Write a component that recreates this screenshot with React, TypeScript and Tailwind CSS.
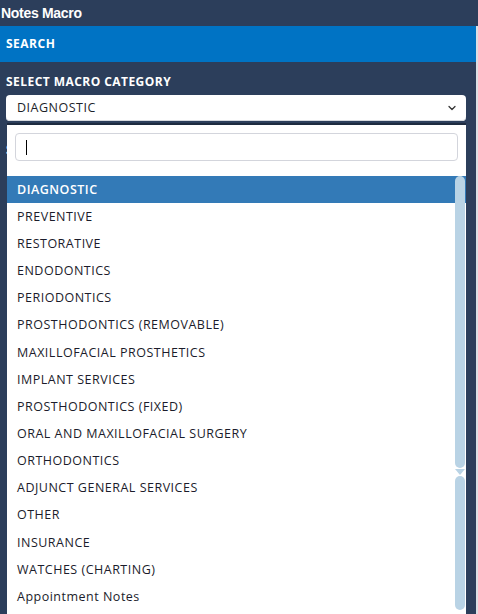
import { ChevronDown } from 'lucide-react';

const categories = [
  'DIAGNOSTIC',
  'PREVENTIVE',
  'RESTORATIVE',
  'ENDODONTICS',
  'PERIODONTICS',
  'PROSTHODONTICS (REMOVABLE)',
  'MAXILLOFACIAL PROSTHETICS',
  'IMPLANT SERVICES',
  'PROSTHODONTICS (FIXED)',
  'ORAL AND MAXILLOFACIAL SURGERY',
  'ORTHODONTICS',
  'ADJUNCT GENERAL SERVICES',
  'OTHER',
  'INSURANCE',
  'WATCHES (CHARTING)',
  'Appointment Notes',
];

const App = () => {
  const selected = 'DIAGNOSTIC';

  return (
    <div className="w-[478px] h-[614px] bg-[#2c3e5b] overflow-hidden flex flex-col font-['Open_Sans',sans-serif]">
      <div className="h-[26px] flex items-center px-[1px] text-white font-bold text-[14px] tracking-[-0.3px] font-['Liberation_Sans',Arial,sans-serif]">
        Notes Macro
      </div>

      <div className="flex flex-1">
        <div className="flex-1 flex flex-col">
          <div className="h-[36px] bg-[#0073c4] flex items-center px-[6px] text-white font-bold text-[12px] tracking-[0.5px]">
            SEARCH
          </div>

          <div className="relative px-[6px] pt-[12px]">
            <div className="text-white font-bold text-[12px] tracking-[0.45px] leading-[16px] mb-[5px]">SELECT MACRO CATEGORY</div>
            <div className="h-[26px] w-[460px] bg-white rounded-[4px] flex items-center justify-between pl-[11px] pr-[8px] shadow-[inset_0_-1px_0_#d6d9de]">
              <span className="text-[12.5px] font-medium tracking-[0.5px] text-[#1d1f2a]">{selected}</span>
              <ChevronDown size={12} strokeWidth={2.5} className="text-[#333]" />
            </div>
            <div className="mt-[20px] text-white font-bold text-[12px] tracking-[0.45px]">SELECT MACRO</div>

            {/* open dropdown */}
            <div className="absolute left-[7px] top-[61px] w-[459px] h-[520px] bg-white border-t-[2px] border-[#1e2b40]">
              <div className="px-[8px] pt-[8px] pb-[15px]">
                <div className="h-[28px] border border-[#d3d5dc] rounded-[4px] flex items-center pl-[10px]">
                  <div className="w-[1px] h-[15px] bg-black" />
                </div>
              </div>
              <ul className="relative">
                {categories.map((c) => (
                  <li
                    key={c}
                    className={`h-[27.15px] flex items-center pl-[10px] pt-[1px] text-[12.5px] tracking-[0.5px] ${
                      c === selected ? 'bg-[#337ab7] text-white font-semibold' : 'text-[#1b1c2b] font-medium'
                    }`}
                  >
                    {c}
                  </li>
                ))}
                <div className="absolute right-[1px] top-0 w-[10px] h-[292px] rounded-[5px] bg-[#b9d3e5]" />
                <div className="absolute right-[1px] top-[293px] w-[10px] h-[6px] bg-[#b9d3e5] [clip-path:polygon(0_0,100%_0,50%_100%)]" />
                <div className="absolute right-[1px] top-[300px] w-[10px] h-[134px] rounded-[5px] bg-[#b9d3e5]" />
              </ul>
            </div>
          </div>
        </div>
        <div className="w-[2px] bg-[#dcdfe4]" />
      </div>
    </div>
  );
};

export default App;
